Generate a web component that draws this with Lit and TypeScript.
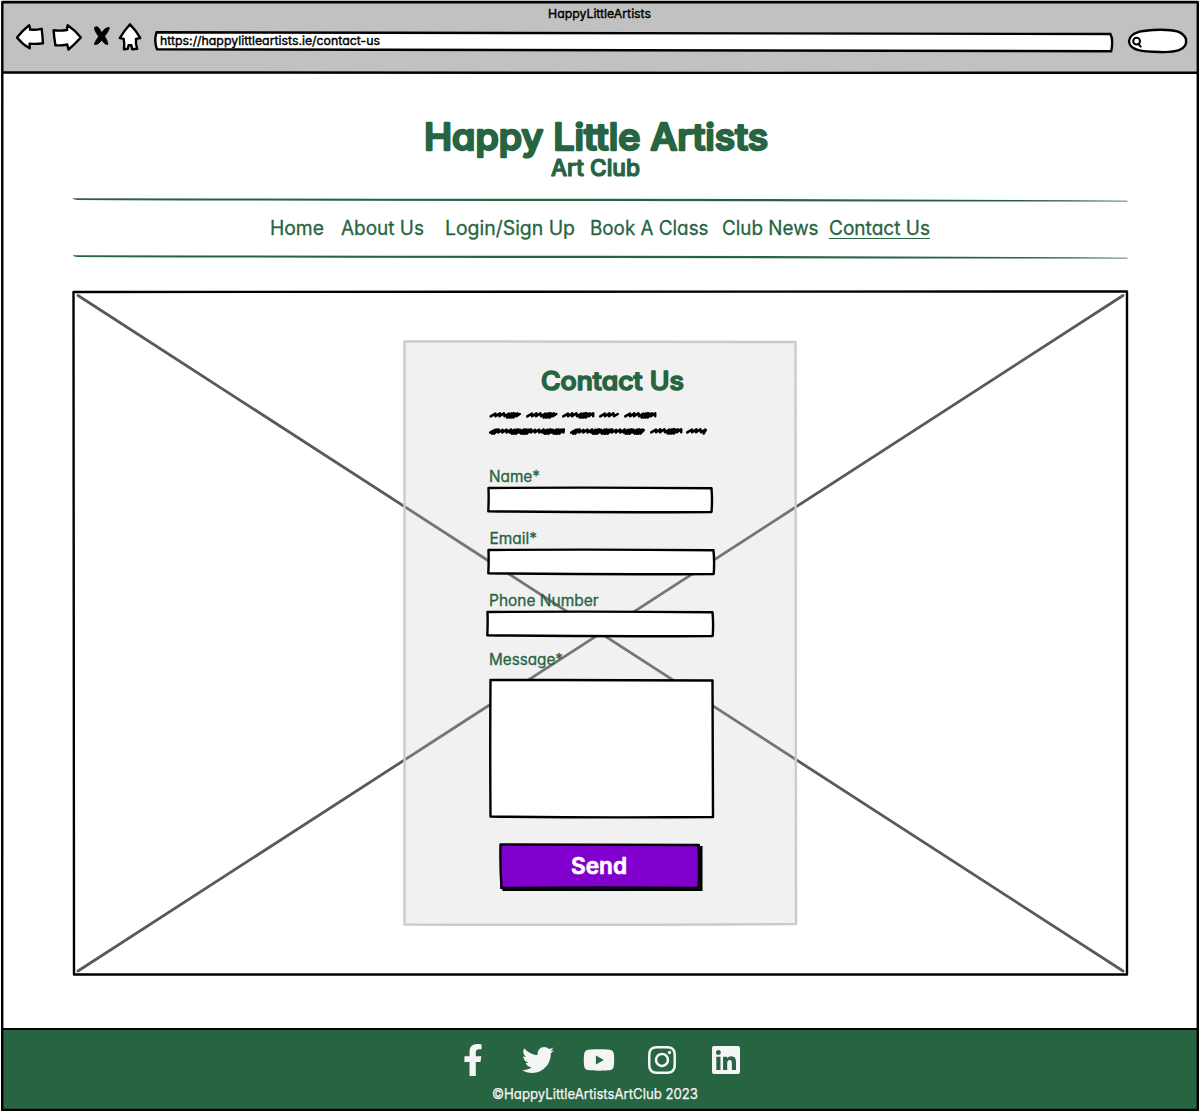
import { LitElement, html, svg, css } from "lit";
import { customElement } from "lit/decorators.js";

interface TextStyle {
  weight?: number;
  stroke?: number;
  shift?: number;
}

/* Hand-lettered text run: fitted to a width, with rounded stroke ends. */
const lettering = (text: string, width: number, size: number, s: TextStyle = {}) => html`
  <svg class="lettering" width=${width} height=${Math.ceil(size * 1.25)}>
    <text
      x=${s.shift ?? 0}
      y=${size}
      font-size=${size}
      font-weight=${s.weight ?? 400}
      stroke-width=${s.stroke ?? 0.4}
      textLength=${width}
      lengthAdjust="spacingAndGlyphs"
    >${text}</text>
  </svg>`;

/* Wobbly outline laid over a box; corners are [x, y] in box coordinates. */
const outline = (c: number[][], bulge: number[][] = [[0, 0], [0, 0], [0, 0], [0, 0]]) => {
  let d = `M${c[0][0]} ${c[0][1]}`;
  for (let i = 0; i < 4; i++) {
    const a = c[i];
    const b = c[(i + 1) % 4];
    const mx = (a[0] + b[0]) / 2 + bulge[i][0];
    const my = (a[1] + b[1]) / 2 + bulge[i][1];
    d += ` Q${mx} ${my} ${b[0]} ${b[1]}`;
  }
  return html`<svg class="outline">${svg`<path d=${d + "Z"} />`}</svg>`;
};

const loose = [4.4, 4, 5, 2.6, 2, 1.8, 2.2, 3.2];
const packed = [1.6, 2, 4, 4, 4.4, 3.4, 2, 1.8, 2, 3.6, 1.8, 2];

/* One scribbled word from x0 to x1, made of slanted back-and-forth strokes. */
const scribble = (x0: number, x1: number, y: number, dense: boolean) => {
  const steps = dense ? packed : loose;
  let d = `M${x0 + 1.2} ${y + 1.4}`;
  let i = 0;
  for (let x = x0 + 1.2; x < x1 - 5.4; i++) {
    const step = steps[i % steps.length];
    d += ` L${(x + 4.8).toFixed(1)} ${(y - 1.4 - (i % 3) * 0.2).toFixed(1)}`;
    x += step;
    d += ` L${(x + 0.4).toFixed(1)} ${(y + 1.3 + (step < 2.8 ? 1.2 : 0)).toFixed(1)}`;
  }
  d += ` L${x1 - 1.2} ${y - 1}`;
  return svg`<path d=${d} />`;
};

const navItems: [string, number, number][] = [
  ["Home", 54, 17],
  ["About Us", 83, 21.5],
  ["Login/Sign Up", 130, 14.5],
  ["Book A Class", 118.5, 14],
  ["Club News", 96.5, 10],
  ["Contact Us", 101, 0],
];

@customElement("app-root")
export class AppRoot extends LitElement {
  static styles = css`
    :host {
      display: block;
      width: 1200px;
      height: 1111px;
      font-family: Inter, "Liberation Sans", sans-serif;
      font-feature-settings: "cv11" 1, "cv05" 0, "calt" 0;
      --green: #276442;
    }
    * { box-sizing: border-box; }
    svg { display: block; overflow: visible; }
    h1, h2, p { margin: 0; font-size: inherit; font-weight: inherit; }
    a { text-decoration: none; }
    .lettering { color: inherit; flex: none; }
    .lettering text { fill: currentColor; stroke: currentColor; stroke-linejoin: round; stroke-linecap: round; }
    .outline {
      position: absolute;
      inset: 0;
      width: 100%;
      height: 100%;
      fill: none;
      stroke: #000;
      stroke-width: 2.4;
      stroke-linejoin: round;
      pointer-events: none;
    }
    .window {
      position: relative;
      width: 1200px;
      height: 1111px;
      background: #fff;
      display: flex;
      flex-direction: column;
      overflow: hidden;
    }
    .toolbar {
      height: 73px;
      margin: 0 2px;
      background: #c1c1c1;
      display: flex;
      flex-direction: column;
      align-items: center;
      flex: none;
    }
    .title { padding-top: 5.5px; height: 24px; flex: none; margin-right: 1.5px; }
    .controls { width: 1196px; height: 49px; display: flex; padding-left: 12px; }
    .controls > * { flex: none; }
    .ink { fill: #fff; stroke: #000; stroke-width: 2.4; stroke-linejoin: round; stroke-linecap: round; }
    .address {
      position: relative;
      width: 958px;
      height: 19px;
      margin: 8px 15px 0 12px;
      padding: 0 5px;
    }
    .address .outline { fill: #fff; }
    .url { position: relative; padding-top: 0.7px; }
    .page {
      height: 955px;
      flex: none;
      padding: 0 72px;
      display: flex;
      flex-direction: column;
      color: var(--green);
    }
    .brand { display: flex; flex-direction: column; align-items: center; padding-top: 40.5px; height: 126px; flex: none; }
    .brand h1 { height: 39px; margin-right: 8px; }
    .brand p { margin-right: 10px; }
    .rule { fill: var(--green); flex: none; }
    nav { display: flex; height: 54px; padding: 12.5px 0 0 197.5px; flex: none; }
    nav a { color: inherit; flex: none; height: 24px; }
    nav .current { border-bottom: 1px solid var(--green); }
    .hero {
      position: relative;
      margin: 32px 0 0 1px;
      width: 1055px;
      height: 684px;
      padding: 50px 0 0 331px;
      flex: none;
    }
    .cross { position: absolute; inset: 0; stroke: #5a5a5a; stroke-width: 2.8; stroke-linecap: round; }
    .card {
      position: relative;
      width: 392px;
      height: 584px;
      background: rgba(200, 200, 200, 0.25);
      padding: 22.5px 0 0 83px;
    }
    .card > .outline { stroke: #cbcbcb; }
    form { display: flex; flex-direction: column; align-items: flex-start; position: relative; }
    h2 { margin-left: 54px; height: 45.5px; }
    .copy { stroke: #000; fill: none; stroke-width: 2.5; stroke-linecap: round; stroke-linejoin: round; }
    label { display: block; padding-left: 2.3px; }
    .name { height: 62px; margin-top: 29.5px; }
    .email { height: 62px; }
    .phone { height: 59px; }
    .message { height: 156px; }
    .field { position: relative; width: 226px; height: 25px; margin: 0.5px 0 0 -2px; }
    .area { position: relative; width: 224px; height: 138px; margin: 6px 0 0 0; }
    .field .outline, .area .outline { fill: #fff; }
    .send {
      position: relative;
      width: 200px;
      height: 45px;
      margin: 38px 0 0 13px;
      padding: 7.2px 0 0 71px;
      border: 0;
      font: inherit;
      color: #fff;
      background: #8200ce;
      box-shadow: 2.500px 2px 0 #000;
      display: flex;
      align-items: flex-start;
    }
    .send .lettering { position: relative; }
    footer {
      height: 83px;
      margin: 0 2px;
      background: var(--green);
      border-top: 2px solid #000;
      color: #f5f5f5;
      display: flex;
      flex-direction: column;
    }
    .social { display: flex; fill: #f5f5f5; height: 55px; padding: 14px 0 0 461px; }
    .legal { padding-left: 490px; }
  `;

  render() {
    const rule = html`<svg class="rule" width="1056" height="3"><path d="M1 -.8Q300 -.4 528 -.2Q800 0 1055 1.700Q1058 2.700 1050 2.600Q800 2.200 528 2Q200 1.900 5 1Q0 0 1 -.8Z" /></svg>`;
    return html`
      <div class="window">
        <header class="toolbar">
          <div class="title">${lettering("HappyLittleArtists", 103, 12.2)}</div>
          <div class="controls">
            <svg width="129" height="32" viewBox="14 24 129 32">
              <g class="ink">
                <path d="M17 37.5Q23 30 29.2 25.3Q30.3 27 30 29.6Q36 30 41.7 28.8Q42.5 36 43 43.3Q36 44.2 29.6 43.6L29.7 48.3Q22 44 17 37.5Z" />
                <path d="M53.6 30.3Q60 31 67.2 30Q66.6 28 67.7 25.2Q75 30 80.8 37.5Q75 44 68.5 49.6L67.2 44.5Q61 45.8 55.4 45.2Q54.2 38 53.6 30.3Z" />
                <path d="M130 24.3Q136.500 31 140.300 38L136 38.900Q135.400 44 137.200 48.800L132.200 49.300L131.400 45.200L128.600 45.200L127.800 48.800L124 49.300Q124.600 44 123.700 38.900L119.800 38.100Q124 31 130 24.300Z" />
              </g>
              <path d="M96.500 26.500Q99 27 101.700 32.700Q104.500 27.500 109.200 27.300Q110 29.500 104.600 36.200Q107.300 40 108 44.200Q105.500 45.500 101.700 40.300Q98 45.300 94.500 44.600Q94 43 98.600 36.500Q94 30 94.500 27.500Z" stroke="#000" stroke-width=".8" />
            </svg>
            <div class="address">
              <svg class="outline"><path d="M1.500 .3Q400 -.4 955.500 2Q958.500 8 956.200 19.200Q600 19.600 2 17.300Q-1.200 9 1.500 .3Z" /></svg>
              <div class="url">${lettering("https://happylittleartists.ie/contact-us", 220, 12.2)}</div>
            </div>
            <svg width="60" height="30" viewBox="1128 24 60 30">
              <g class="ink">
                <path d="M1129 41C1130 31 1146 30 1160 29.700C1174 29.600 1183 31 1186 39C1188 51 1174 52.500 1160 52C1144 51.500 1129 51 1129 41Z" />
                <circle cx="1136.600" cy="41.200" r="3.400" stroke-width="2" />
                <path d="M1138.200 44L1140.800 46.600" stroke-width="2" />
              </g>
            </svg>
          </div>
        </header>

        <main class="page">
          <div class="brand">
            <h1>${lettering("Happy Little Artists", 344, 36.300, { weight: 500, stroke: 2.400 })}</h1>
            <p>${lettering("Art Club", 89, 22.500, { weight: 500, stroke: 1.200 })}</p>
          </div>
          ${rule}
          <nav>
            ${navItems.map(([name, width, gap], i) => html`
              <a class=${i === 5 ? "current" : ""} style="margin-right:${gap}px">${lettering(name, width, 19.800, { stroke: 0.300 })}</a>`)}
          </nav>
          ${rule}

          <section class="hero">
            <svg class="cross" width="1055" height="684">
              <path d="M5 4.500L1050 680M1050 4.500L5 680" />
            </svg>
            ${outline([[0.5, 1], [1054, 0.5], [1054, 683.5], [1, 683.5]])}
            <div class="card">
              ${outline([[0.5, 0.5], [391.5, 1], [392, 583], [0.5, 583.500]], [[0, -0.5], [0, 0], [0, 1], [0, 0]])}
              <form>
                <h2>${lettering("Contact Us", 143, 25.500, { weight: 500, stroke: 1.600 })}</h2>
                <svg class="copy" width="220" height="28" viewBox="487 409 220 28">
                  ${[[489.5, 521], [526, 557.5], [562, 594], [599, 619], [624, 656]].map(([a, b]) => scribble(a, b, 415, false))}
                  ${[[489, 565], [570, 645]].map(([a, b]) => scribble(a, b, 431.200, true))}
                  ${[[650, 682], [686, 707]].map(([a, b]) => scribble(a, b, 431, false))}
                </svg>
                <div class="name">
                  <label>${lettering("Name*", 51, 15.200, { stroke: 0.300 })}</label>
                  <div class="field">${outline([[3.5, 2], [226.500, 2.300], [226.500, 26], [3.300, 25.300]], [[0, -1], [1, 0], [0, 1], [0.500, 0]])}</div>
                </div>
                <div class="email">
                  <label>${lettering("Email*", 47.500, 15.200, { stroke: 0.300, shift: 0.500 })}</label>
                  <div class="field">${outline([[3.5, 2], [228.500, 2.300], [228.700, 26], [3.300, 25.300]], [[0, -1], [1, 0], [0, 1], [0.500, 0]])}</div>
                </div>
                <div class="phone">
                  <label>${lettering("Phone Number", 109.500, 15.200, { stroke: 0.300 })}</label>
                  <div class="field">${outline([[2.500, 2], [227.500, 2.300], [227.700, 26], [2.300, 25.300]], [[0, -1], [1, 0], [0, 1], [0.500, 0]])}</div>
                </div>
                <div class="message">
                  <label>${lettering("Message*", 74, 15.200, { stroke: 0.300 })}</label>
                  <div class="area">${outline([[3.500, 5], [225.500, 5.500], [226, 142], [3.500, 141.500]], [[0, -0.500], [0, 0], [0, 1.300], [-0.500, 0]])}</div>
                </div>
                <button class="send" type="button">
                  ${outline([[0.5, 0.5], [198.500, 1], [198.500, 44], [1.500, 44]], [[0, 0], [1, 0], [0, -1], [-1, 0]])}
                  ${lettering("Send", 56, 23, { weight: 600, stroke: 0.700 })}
                </button>
              </form>
            </div>
          </section>
        </main>

        <footer>
          <div class="social">
            <svg width="20" height="32" viewBox="0 0 320 512"><path d="M279.140 288l14.220-92.660h-88.910v-60.130c0-25.350 12.420-50.060 52.240-50.060h40.420V6.260S260.430 0 225.360 0c-73.220 0-121.080 44.380-121.080 124.720v70.620H22.890V288h81.390v224h100.170V288z" /></svg>
            <svg width="32" height="32" viewBox="0 0 512 512" style="margin-left:39px"><path d="M459.370 151.716c.325 4.548.325 9.097.325 13.645 0 138.720-105.583 298.558-298.558 298.558-59.452 0-114.680-17.219-161.137-47.106 8.447.974 16.568 1.299 25.340 1.299 49.055 0 94.213-16.568 130.274-44.832-46.132-.975-84.792-31.188-98.112-72.772 6.498.974 12.995 1.624 19.818 1.624 9.421 0 18.843-1.300 27.614-3.573-48.081-9.747-84.143-51.980-84.143-102.985v-1.299c13.969 7.797 30.214 12.670 47.431 13.319-28.264-18.843-46.781-51.005-46.781-87.391 0-19.492 5.197-37.360 14.294-52.954 51.655 63.675 129.300 105.258 216.365 109.807-1.624-7.797-2.599-15.918-2.599-24.040 0-57.828 46.782-104.934 104.934-104.934 30.213 0 57.502 12.670 76.670 33.137 23.715-4.548 46.456-13.320 66.599-25.340-7.798 24.366-24.366 44.833-46.132 57.827 21.117-2.273 41.584-8.122 60.426-16.243-14.292 20.791-32.161 39.308-52.628 54.253z" /></svg>
            <svg width="32" height="32" viewBox="0 0 576 512" style="margin-left:29px"><path d="M549.655 124.083c-6.281-23.650-24.787-42.276-48.284-48.597C458.781 64 288 64 288 64S117.220 64 74.629 75.486c-23.497 6.322-42.003 24.947-48.284 48.597-11.412 42.867-11.412 132.305-11.412 132.305s0 89.438 11.412 132.305c6.281 23.650 24.787 41.500 48.284 47.821C117.220 448 288 448 288 448s170.780 0 213.371-11.486c23.497-6.321 42.003-24.171 48.284-47.821 11.412-42.867 11.412-132.305 11.412-132.305s0-89.438-11.412-132.305zm-317.510 213.508V175.185l142.739 81.205-142.739 81.201z" /></svg>
            <svg width="28" height="32" viewBox="0 0 448 512" style="margin-left:33px"><path d="M224.100 141c-63.600 0-114.900 51.300-114.900 114.900s51.300 114.900 114.900 114.900S339 319.500 339 255.900 287.700 141 224.100 141zm0 189.600c-41.100 0-74.700-33.500-74.700-74.700s33.500-74.700 74.700-74.700 74.700 33.500 74.700 74.700-33.600 74.700-74.700 74.700zm146.400-194.300c0 14.900-12 26.800-26.800 26.800-14.900 0-26.800-12-26.800-26.800s12-26.800 26.800-26.800 26.800 12 26.800 26.800zm76.100 27.200c-1.700-35.900-9.900-67.700-36.200-93.900-26.200-26.200-58-34.400-93.900-36.200-37-2.100-147.900-2.100-184.900 0-35.800 1.700-67.600 9.900-93.900 36.100s-34.400 58-36.200 93.900c-2.100 37-2.100 147.900 0 184.900 1.700 35.900 9.900 67.700 36.200 93.900s58 34.400 93.900 36.200c37 2.100 147.900 2.100 184.900 0 35.900-1.700 67.700-9.900 93.900-36.200 26.200-26.200 34.400-58 36.200-93.900 2.100-37 2.100-147.800 0-184.800zM398.800 388c-7.800 19.600-22.900 34.700-42.600 42.600-29.500 11.700-99.500 9-132.100 9s-102.700 2.600-132.100-9c-19.600-7.800-34.700-22.900-42.600-42.600-11.700-29.500-9-99.500-9-132.100s-2.600-102.700 9-132.100c7.800-19.600 22.900-34.700 42.600-42.600 29.500-11.700 99.500-9 132.100-9s102.700-2.600 132.100 9c19.600 7.800 34.700 22.900 42.600 42.600 11.700 29.500 9 99.500 9 132.100s2.700 102.700-9 132.100z" /></svg>
            <svg width="28" height="32" viewBox="0 0 448 512" style="margin-left:36px"><path d="M416 32H31.900C14.300 32 0 46.500 0 64.300v383.400C0 465.500 14.300 480 31.900 480H416c17.600 0 32-14.500 32-32.300V64.300c0-17.800-14.400-32.300-32-32.300zM135.400 416H69V202.200h66.500V416zm-33.200-243c-21.300 0-38.500-17.300-38.500-38.500S80.900 96 102.200 96c21.200 0 38.500 17.300 38.500 38.500 0 21.300-17.200 38.500-38.500 38.500zm282.100 243h-66.400V312c0-24.800-.5-56.700-34.500-56.700-34.600 0-39.900 27-39.900 54.900V416h-66.400V202.200h63.700v29.200h.9c8.900-16.800 30.600-34.500 62.900-34.500 67.200 0 79.700 44.300 79.700 101.900V416z" /></svg>
          </div>
          <div class="legal">${lettering("©HappyLittleArtistsArtClub 2023", 206, 14, { stroke: 0.250 })}</div>
        </footer>

        <svg class="outline"><path d="M2.300 2.200L1197.800 2.200L1197.800 1110L2.200 1110ZM2.200 72.300Q600 73.200 1197.800 72.700" /></svg>
      </div>
    `;
  }
}
